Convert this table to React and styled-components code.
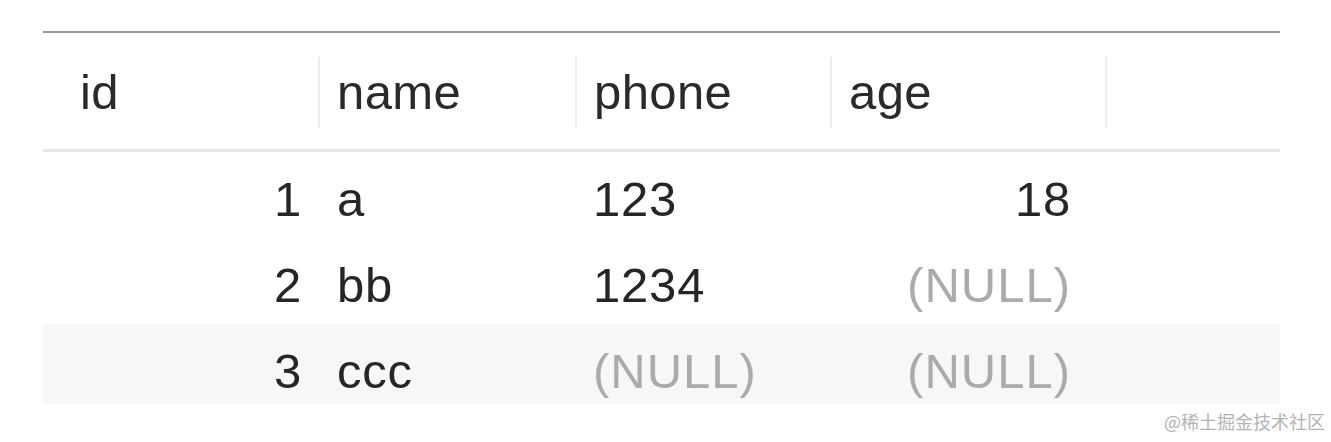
import React from 'react'
import styled, { createGlobalStyle } from 'styled-components'

const GlobalStyle = createGlobalStyle`
  html, body {
    margin: 0;
    padding: 0;
    background: #ffffff;
  }
  body {
    font-family: "Liberation Sans", Arial, sans-serif;
    color: #262626;
  }
`

const Page = styled.div`
  width: 1331px;
  height: 442px;
  display: flex;
  flex-direction: column;
  padding-top: 31px;
  box-sizing: border-box;
`

const Table = styled.div`
  margin-left: 43px;
  width: 1237px;
  border-top: 2px solid #9a9a9a;
`

const Columns = styled.div`
  display: grid;
  grid-template-columns: 277px 257px 255px 275px 173px;
`

const HeaderRow = styled(Columns)`
  padding: 24px 0 21px;
  border-bottom: 3px solid #e7e7e7;
`

const HeaderCell = styled.div`
  height: 71px;
  display: flex;
  align-items: center;
  box-sizing: border-box;
  padding-left: ${({ $pad }) => $pad}px;
  border-right: ${({ $last }) => ($last ? 'none' : '2px solid #ececec')};
  font-size: 49px;
  line-height: 49px;
  letter-spacing: 0.4px;
  color: #2a2a2a;
`

const Row = styled(Columns)`
  height: ${({ $h }) => $h}px;
  background: ${({ $shade }) => ($shade ? '#f7f7f7' : 'transparent')};
`

const Cell = styled.div`
  box-sizing: border-box;
  padding-top: 23px;
  padding-left: ${({ $left }) => $left || 0}px;
  padding-right: ${({ $right }) => $right || 0}px;
  text-align: ${({ $align }) => $align};
  font-size: 49px;
  line-height: 49px;
  letter-spacing: ${({ $null }) => ($null ? '1px' : '0.8px')};
  white-space: nowrap;
  color: ${({ $null }) => ($null ? '#ababab' : '#262626')};
`

const Watermark = styled.div`
  align-self: flex-end;
  margin-top: 8px;
  margin-right: 6px;
  font-family: "Noto Sans CJK SC", "Liberation Sans", sans-serif;
  font-size: 18px;
  line-height: 18px;
  color: #b3b3b3;
`

const columns = [
  { key: 'id', pad: 37, align: 'right', left: 0, right: 18 },
  { key: 'name', pad: 17, align: 'left', left: 17, right: 0 },
  { key: 'phone', pad: 17, align: 'left', left: 16, right: 0 },
  { key: 'age', pad: 17, align: 'right', left: 0, right: 36 },
]

const rows = [
  { id: 1, name: 'a', phone: '123', age: 18, h: 86 },
  { id: 2, name: 'bb', phone: '1234', age: null, h: 86 },
  { id: 3, name: 'ccc', phone: null, age: null, h: 80, shade: true },
]

const App = () => {
  return (
    <>
      <GlobalStyle />
      <Page>
        <Table>
          <HeaderRow>
            {columns.map((c) => (
              <HeaderCell key={c.key} $pad={c.pad}>
                {c.key}
              </HeaderCell>
            ))}
            <HeaderCell $last />
          </HeaderRow>
          {rows.map((r) => (
            <Row key={r.id} $h={r.h} $shade={r.shade}>
              {columns.map((c) => (
                <Cell
                  key={c.key}
                  $align={c.align}
                  $left={c.left}
                  $right={c.right}
                  $null={r[c.key] === null}
                >
                  {r[c.key] === null ? '(NULL)' : r[c.key]}
                </Cell>
              ))}
              <Cell />
            </Row>
          ))}
        </Table>
        <Watermark>@稀土掘金技术社区</Watermark>
      </Page>
    </>
  )
}

export default App
